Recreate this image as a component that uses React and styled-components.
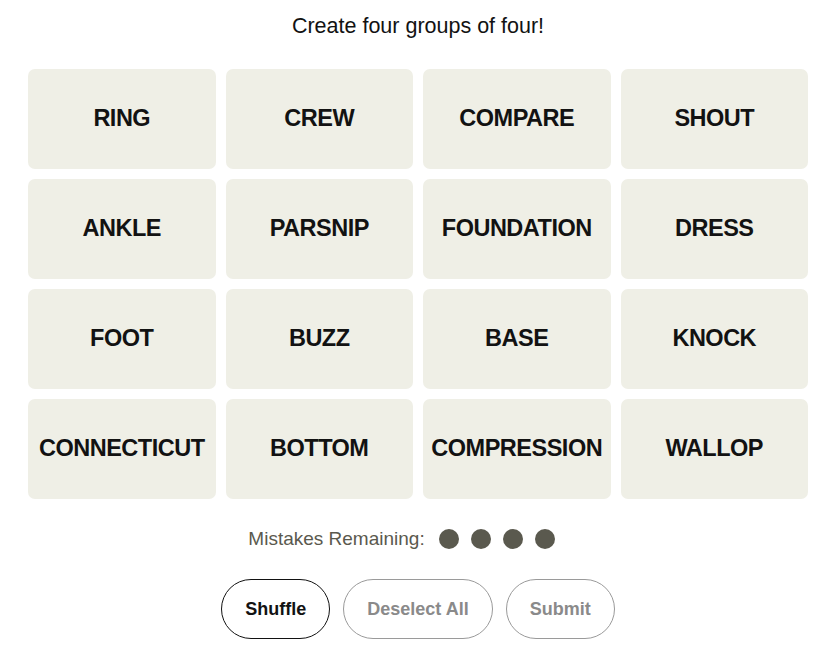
import React from "react";
import styled, { createGlobalStyle } from "styled-components";

const GlobalStyle = createGlobalStyle`
  body {
    margin: 0;
    background: #fff;
    font-family: "Liberation Sans", Arial, sans-serif;
  }
`;

const Page = styled.div`
  width: 780px;
  margin-left: 28px;
  display: flex;
  flex-direction: column;
  align-items: center;
`;

const Title = styled.p`
  margin: 14px 0 0;
  font-size: 21.5px;
  line-height: 24px;
  color: #121212;
`;

const Board = styled.div`
  margin-top: 31px;
  width: 100%;
  display: grid;
  grid-template-columns: repeat(4, 1fr);
  grid-auto-rows: 100px;
  gap: 10px;
`;

const Tile = styled.button`
  border: none;
  border-radius: 7px;
  background: #efefe6;
  color: #121212;
  font-family: "Liberation Sans", Arial, sans-serif;
  font-weight: 700;
  font-size: 23.5px;
  letter-spacing: -0.5px;
  text-transform: uppercase;
  padding: 0 0 2px;
  cursor: pointer;
`;

const Mistakes = styled.div`
  margin-top: 29px;
  margin-right: 33px;
  display: flex;
  align-items: center;
  gap: 14px;
  font-size: 19px;
  color: #5a594e;
`;

const Dots = styled.div`
  display: flex;
  gap: 12px;
`;

const Dot = styled.span`
  width: 20px;
  height: 20px;
  border-radius: 50%;
  background: #5a594e;
`;

const Actions = styled.div`
  margin-top: 29px;
  display: flex;
  gap: 13px;
`;

const Pill = styled.button`
  height: 60px;
  padding: 0 23px;
  border-radius: 30px;
  background: #fff;
  border: 1px solid ${({ $active }) => ($active ? "#121212" : "#9a9a9a")};
  color: ${({ $active }) => ($active ? "#121212" : "#8a8a8a")};
  font-family: "Liberation Sans", Arial, sans-serif;
  font-weight: 700;
  font-size: 18px;
  cursor: pointer;
`;

const words = [
  "Ring", "Crew", "Compare", "Shout",
  "Ankle", "Parsnip", "Foundation", "Dress",
  "Foot", "Buzz", "Base", "Knock",
  "Connecticut", "Bottom", "Compression", "Wallop",
];

export default function App() {
  return (
    <>
      <GlobalStyle />
      <Page>
        <Title>Create four groups of four!</Title>
        <Board>
          {words.map((w) => (
            <Tile key={w}>{w}</Tile>
          ))}
        </Board>
        <Mistakes>
          Mistakes Remaining:
          <Dots>
            <Dot />
            <Dot />
            <Dot />
            <Dot />
          </Dots>
        </Mistakes>
        <Actions>
          <Pill $active>Shuffle</Pill>
          <Pill>Deselect All</Pill>
          <Pill>Submit</Pill>
        </Actions>
      </Page>
    </>
  );
}
